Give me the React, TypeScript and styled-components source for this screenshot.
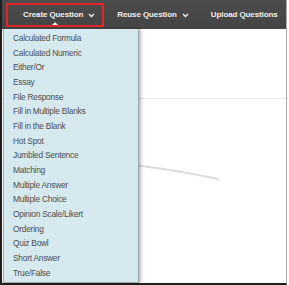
import styled, { createGlobalStyle } from 'styled-components';

const GlobalStyle = createGlobalStyle`
  html, body {
    margin: 0;
    padding: 0;
    background: #ffffff;
  }
  * {
    box-sizing: border-box;
  }
`;

const Frame = styled.div`
  width: 287px;
  height: 285px;
  display: flex;
  flex-direction: column;
  border-left: 2px solid #1f1f1f;
  border-bottom: 2px solid #1f1f1f;
  border-right: 1px solid #a8a8a8;
  background: #ffffff;
  font-family: 'Liberation Sans', Arial, sans-serif;
`;

const NavBar = styled.div`
  height: 29px;
  flex-shrink: 0;
  display: flex;
  align-items: center;
  padding-left: 4px;
  background: linear-gradient(#4c4c4c, #444444);
`;

const NavItem = styled.div<{ $active?: boolean }>`
  position: relative;
  height: 24px;
  display: flex;
  align-items: center;
  gap: 5px;
  padding: 0 7px 0 ${(p) => (p.$active ? '15px' : '11px')};
  border: 2px solid ${(p) => (p.$active ? '#e0262a' : 'transparent')};
  color: #f2f2f2;
  font-size: 8px;
  font-weight: bold;
  letter-spacing: -0.1px;
  white-space: nowrap;
`;

const Caret = styled.span`
  position: absolute;
  left: 44px;
  bottom: 0;
  width: 0;
  height: 0;
  border-left: 3px solid transparent;
  border-right: 3px solid transparent;
  border-bottom: 3px solid #e6e6e6;
`;

const Chevron = () => (
  <svg width="7" height="5" viewBox="0 0 7 5" style={{ marginTop: 1 }}>
    <path d="M1 1 L3.5 3.5 L6 1" fill="none" stroke="#f2f2f2" strokeWidth="1.4" />
  </svg>
);

const Body = styled.div`
  position: relative;
  flex: 1;
  display: flex;
  flex-direction: column;
  background: #ffffff;
`;

const Section = styled.div<{ $height?: number }>`
  height: ${(p) => (p.$height ? `${p.$height}px` : 'auto')};
  flex: ${(p) => (p.$height ? '0 0 auto' : '1')};
  border-bottom: ${(p) => (p.$height ? '1px solid #e8e8e8' : 'none')};
  position: relative;
`;

const Smudge = styled.svg`
  position: absolute;
  left: 0;
  top: 0;
`;

const Menu = styled.ul`
  position: absolute;
  left: 1px;
  top: 0;
  width: 136px;
  height: 254px;
  margin: 0;
  padding: 2px 0 0;
  list-style: none;
  background: #d5e9ef;
  border: 1px solid #9fa8ab;
  border-top: none;
  box-shadow: 2px 0 3px rgba(0, 0, 0, 0.28);
`;

const MenuItem = styled.li`
  height: 14.67px;
  line-height: 14.67px;
  padding-left: 9px;
  color: #4e4e4e;
  font-size: 8.4px;
  letter-spacing: -0.25px;
  white-space: nowrap;
`;

const items = [
  'Calculated Formula',
  'Calculated Numeric',
  'Either/Or',
  'Essay',
  'File Response',
  'Fill in Multiple Blanks',
  'Fill in the Blank',
  'Hot Spot',
  'Jumbled Sentence',
  'Matching',
  'Multiple Answer',
  'Multiple Choice',
  'Opinion Scale/Likert',
  'Ordering',
  'Quiz Bowl',
  'Short Answer',
  'True/False',
];

export default function App() {
  return (
    <>
      <GlobalStyle />
      <Frame>
        <NavBar>
          <NavItem $active>
            Create Question
            <Chevron />
            <Caret />
          </NavItem>
          <NavItem>
            Reuse Question
            <Chevron />
          </NavItem>
          <NavItem>Upload Questions</NavItem>
        </NavBar>
        <Body>
          <Section $height={70} />
          <Section>
            <Smudge width="284" height="120">
              <path
                d="M100 62 Q 170 70 216 80"
                fill="none"
                stroke="#dcdcdc"
                strokeWidth="2.2"
                strokeLinecap="round"
              />
            </Smudge>
          </Section>
          <Menu>
            {items.map((item) => (
              <MenuItem key={item}>{item}</MenuItem>
            ))}
          </Menu>
        </Body>
      </Frame>
    </>
  );
}
